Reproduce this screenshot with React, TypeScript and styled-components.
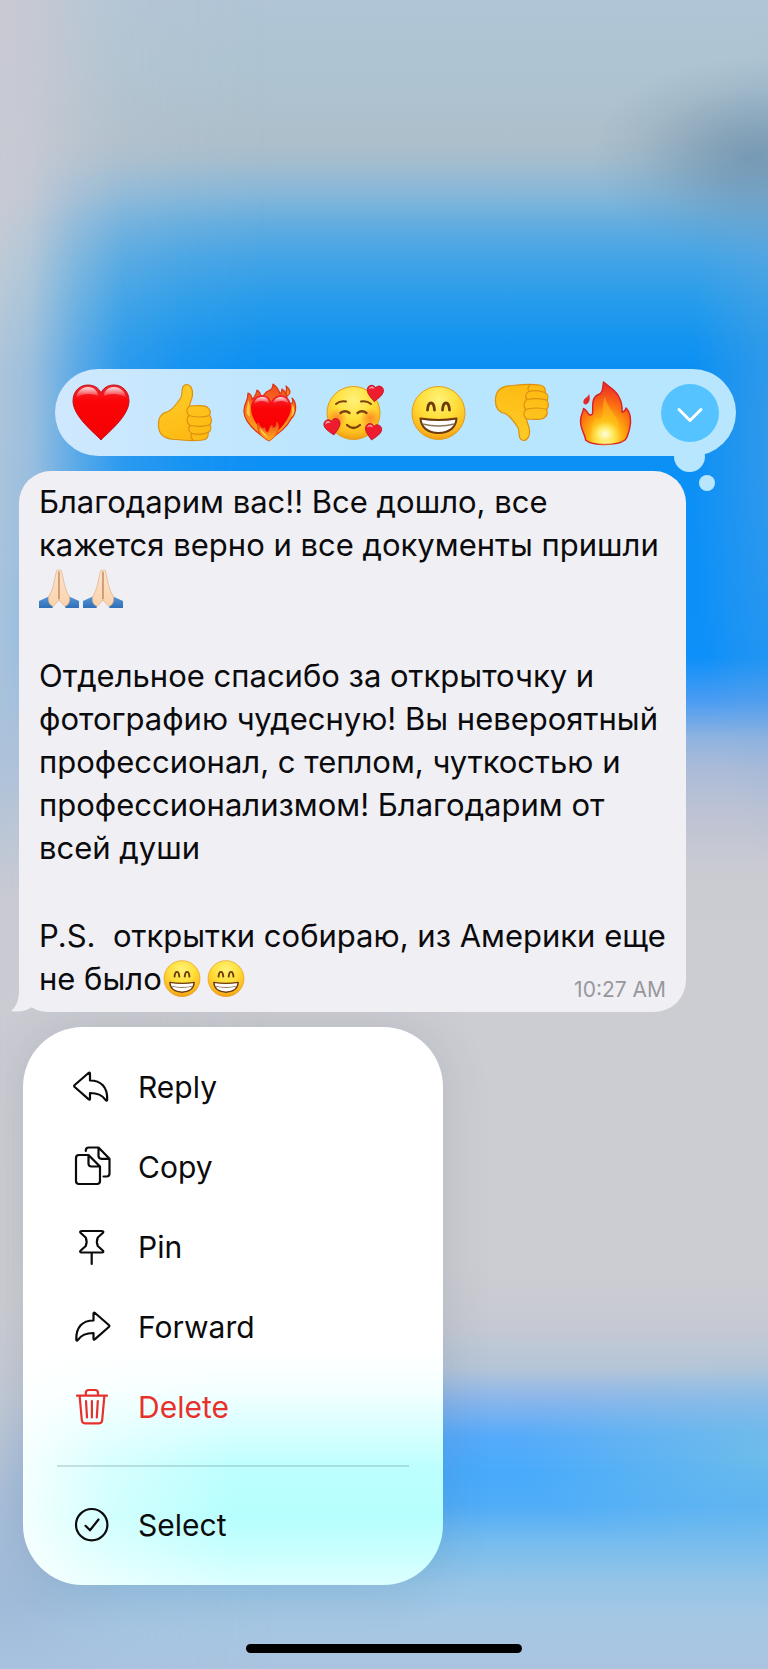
import React from "react";
import styled, { createGlobalStyle } from "styled-components";

const INK = "#0b0b0d";
const BUBBLE = "#f0eff4";
const DANGER = "#e8302c";

const GlobalStyle = createGlobalStyle`
  *, *::before, *::after { box-sizing: border-box; }
  body {
    margin: 0;
    font-family: Inter, "Liberation Sans", sans-serif;
    color: ${INK};
    background: #cccdd3;
  }
  button { font: inherit; color: inherit; border: 0; padding: 0; background: none; cursor: pointer; }
`;

const Screen = styled.main`
  position: relative;
  isolation: isolate;
  overflow: hidden;
  min-height: 100vh;
  display: flex;
  flex-direction: column;
  padding-top: 369px;
  background:
    radial-gradient(21% 6% at 98% 9.4%, rgba(84, 126, 158, 0.55), rgba(84, 126, 158, 0.4) 30%, rgba(84, 126, 158, 0.12) 70%, rgba(84, 126, 158, 0)),
    radial-gradient(36% 6% at 103% 87%, rgba(135, 202, 220, 0.6), rgba(135, 202, 220, 0.3) 50%, rgba(135, 202, 220, 0)),
    radial-gradient(12% 26% at 102% 26%, rgba(120, 170, 215, 0.4), rgba(120, 170, 215, 0)),
    linear-gradient(
      180deg,
      #b0c5d6 0%, #aec4d2 4%, #adbfcb 8.4%, #a2bdcf 9.8%, #86b7d9 11.6%, #62ade0 13.4%,
      #44a4e6 15.4%, #279ceb 18%, #1394f0 20.4%, #0b90f3 22%, #0c90f8 34%, #0d90f9 39.4%,
      #4a9cf2 42%, #8fb3e0 44.2%, #aabbd8 46%, #bcc2d4 48.4%, #cacbd2 52%, #cccdd3 56%, #cccdd3 76%,
      #c8cad2 79%, #b5c5d8 82%, #87b5ec 84%, #57abfa 86%, #48aafc 88.2%, #50adf8 90.2%,
      #76bcee 92.4%, #97c5e6 95%, #a5c7e3 97.2%, #aac4e0 100%
    );

  &::before {
    content: "";
    position: absolute;
    inset: 0;
    z-index: -1;
    background: linear-gradient(
      180deg,
      #c8c9d2 0%, #c8cad3 12%, #bccad6 16%, #acc4da 22%, #a6c2dd 38%, #aec2d9 46%,
      #c9cad2 54%, #cccdd3 78%, #c2c9d5 84%, #aabfd9 90%, #a0bad9 96%, #a8c2df 100%
    );
    mask-image: linear-gradient(90deg, #000 0%, rgba(0, 0, 0, 0.9) 4%, rgba(0, 0, 0, 0.5) 10%, rgba(0, 0, 0, 0.2) 16%, rgba(0, 0, 0, 0.08) 24%, transparent 36%);
  }
`;

const ReactionBar = styled.div`
  position: relative;
  display: flex;
  align-items: center;
  justify-content: space-between;
  height: 87px;
  margin: 0 32px 0 55px;
  padding: 0 17px;
  border-radius: 44px;
  background: linear-gradient(90deg, #cfe8fe, #b8e6fe 45%, #b8e6fe);

  &::before, &::after {
    content: "";
    position: absolute;
    border-radius: 50%;
    background: #b8e6fe;
  }
  &::before { width: 31px; height: 31px; right: 31px; bottom: -16px; }
  &::after { width: 16px; height: 16px; right: 21px; bottom: -35px; }
`;

const Reaction = styled.button<{ $filled?: boolean }>`
  position: relative;
  z-index: 1;
  display: grid;
  place-items: center;
  width: 58px;
  height: 58px;
  border-radius: 50%;
  background: ${(p) => (p.$filled ? "#54c3ff" : "none")};
`;

const Glyph = styled.svg<{ $size: number }>`
  display: block;
  width: ${(p) => p.$size}px;
  height: ${(p) => p.$size}px;
  overflow: visible;
`;

const InlineEmoji = styled.svg`
  width: 40px;
  height: 40px;
  margin-right: 4px;
  vertical-align: -9px;
  overflow: visible;
`;

const Bubble = styled.article`
  position: relative;
  display: grid;
  margin: 15px 82px 0 19px;
  padding: 9px 20px 12px;
  border-radius: 32px 32px 32px 28px;
  background: ${BUBBLE};
`;

const Tail = styled.svg`
  position: absolute;
  left: -8px;
  bottom: 0;
  width: 24px;
  height: 27px;
`;

const MessageText = styled.div`
  grid-area: 1 / 1;
  font-size: 31px;
  line-height: 43px;
  white-space: pre-wrap;

  p { margin: 0; }
  p + p { margin-top: 45px; }
`;

const Time = styled.time`
  grid-area: 1 / 1;
  place-self: end;
  font-size: 21px;
  line-height: 20px;
  color: #98979d;
`;

const Menu = styled.nav`
  width: 420px;
  max-width: calc(100% - 46px);
  margin: 15px 0 58px 23px;
  padding: 20px 0;
  border-radius: 60px;
  background:
    linear-gradient(90deg, rgba(255, 255, 255, 0.85), rgba(255, 255, 255, 0.4) 20%, rgba(255, 255, 255, 0) 50%),
    linear-gradient(180deg, #fff 58%, #f4ffff 65%, #d9ffff 72%, #bdfffe 79%, #b6fffe 88%, #c8fffe 94%, #dcffff 100%),
    #fff;
  box-shadow: 0 0 50px rgba(60, 70, 90, 0.14);
`;

const MenuItem = styled.button<{ $danger?: boolean }>`
  display: flex;
  align-items: center;
  gap: 26px;
  width: 100%;
  height: 80px;
  padding: 0 49px;
  font-size: 30px;
  line-height: 40px;
  text-align: left;
  color: ${(p) => (p.$danger ? DANGER : INK)};
`;

const Divider = styled.hr`
  height: 2px;
  margin: 18px 34px;
  border: 0;
  background: rgba(80, 110, 120, 0.22);
`;

const HomeIndicator = styled.div`
  width: 36%;
  height: 9px;
  margin: auto auto 16px;
  border-radius: 5px;
  background: #000;
`;

const HEART = "M29 56C25 51 1 33 1 17C1 7 8 1 16 1C22 1 27 4 29 9C31 4 36 1 42 1C50 1 57 7 57 17C57 33 33 51 29 56Z";

function EmojiPaints() {
  return (
    <svg width="0" height="0" aria-hidden="true" style={{ position: "absolute" }}>
      <defs>
        <linearGradient id="heart" x1="0" y1="0" x2="0" y2="1">
          <stop offset="0" stopColor="#ee2a35" />
          <stop offset="0.3" stopColor="#fb0406" />
          <stop offset="1" stopColor="#f50003" />
        </linearGradient>
        <linearGradient id="gloss" x1="0" y1="0" x2="0" y2="1">
          <stop offset="0" stopColor="#fff" stopOpacity="0.85" />
          <stop offset="1" stopColor="#fff" stopOpacity="0" />
        </linearGradient>
        <radialGradient id="face" cx="0.5" cy="0.25" r="0.78">
          <stop offset="0" stopColor="#fff27a" />
          <stop offset="0.45" stopColor="#ffdf3a" />
          <stop offset="0.8" stopColor="#fdbd1e" />
          <stop offset="1" stopColor="#ee9413" />
        </radialGradient>
        <radialGradient id="blush">
          <stop offset="0" stopColor="#ff7420" stopOpacity="0.75" />
          <stop offset="1" stopColor="#ff7420" stopOpacity="0" />
        </radialGradient>
        <linearGradient id="hand" x1="0" y1="0" x2="0.3" y2="1">
          <stop offset="0" stopColor="#ffcd2b" />
          <stop offset="1" stopColor="#fdbb13" />
        </linearGradient>
        <radialGradient id="flame" cx="0.5" cy="0.92" r="0.95">
          <stop offset="0" stopColor="#fffce0" />
          <stop offset="0.14" stopColor="#ffee58" />
          <stop offset="0.36" stopColor="#ffb010" />
          <stop offset="0.6" stopColor="#fb6f12" />
          <stop offset="0.9" stopColor="#ee3023" />
        </radialGradient>
        <radialGradient id="glow">
          <stop offset="0" stopColor="#fffde0" />
          <stop offset="0.5" stopColor="#fff27a" stopOpacity="0.8" />
          <stop offset="1" stopColor="#ffe040" stopOpacity="0" />
        </radialGradient>
        <linearGradient id="ember" x1="0" y1="0" x2="0" y2="1">
          <stop offset="0" stopColor="#f04a1c" />
          <stop offset="1" stopColor="#ffb21c" />
        </linearGradient>
        <linearGradient id="skin" x1="0" y1="0" x2="0" y2="1">
          <stop offset="0" stopColor="#fbe3cb" />
          <stop offset="1" stopColor="#fbd3ac" />
        </linearGradient>
        <linearGradient id="sleeve" x1="0" y1="0" x2="0" y2="1">
          <stop offset="0" stopColor="#5796d6" />
          <stop offset="1" stopColor="#2f6fb8" />
        </linearGradient>
      </defs>
    </svg>
  );
}

const HeartEmoji = () => (
  <>
    <path d={HEART} fill="url(#heart)" stroke="#c01218" strokeWidth="1" />
    <path d="M4 14C5 7 10 3 16 3C22 3 26 7 26 12C20 9 10 9 4 14Z" fill="url(#gloss)" />
    <path d="M32 12C32 7 36 3 42 3C48 3 53 7 54 14C48 9 38 9 32 12Z" fill="url(#gloss)" />
  </>
);

const ThumbUpEmoji = () => (
  <g stroke="#dd9010" strokeWidth="1.2" strokeLinejoin="round" strokeLinecap="round">
    <path
      fill="url(#hand)"
      d="M30.500 .5C35 .5 37 6 36.500 11C36 16 33.500 19 33.500 22C40 21.500 48 21 51 23C54 25 55 28 53.500 31.500C56 34 56 38 54 40.500C55.500 43.500 55 47 52 48.500C53 52 51 55.500 47 56C39 57 28 56.500 20 55.500C10 55.500 3 52 2.500 42C2 34 5 29 12 27.500C17 25.500 22 18 25 13.500C27 9 24.500 1 30.500 .5Z"
    />
    <path fill="none" d="M33.500 22C30 25 30 29 33 31.500M53.500 31.500C47 34 37 33 33 31.500C30 34 30.500 39 34 41.500M54 40.500C49 43 39 42.500 34 41.500C31.500 44 32.500 48 36 49.500M52 48.500C47 50.500 40 50.500 36 49.500C34 51.500 35 54.500 37 56" />
  </g>
);

const ThumbDownEmoji = () => (
  <g transform="matrix(1 0 0 -1 0 57)">
    <ThumbUpEmoji />
  </g>
);

const HeartOnFireEmoji = () => (
  <>
    <g fill="url(#ember)" stroke="#dc3218" strokeWidth="1.2" strokeLinejoin="round">
      <path d="M28 56C14 47 3 37 4 26C4 19 8 18 8 9C11 10 12 13 12 16C15 13 16 11 17 6C20 8 21 11 21 14C25 11 25 8 28 7C32 6 33 4 33 0C37 3 39 6 40 10C41 9 42 7 42 5C46 8 47 11 47 15C48 18 50 20 52 19C53 18 53 16 52 14C57 19 57 29 51 35C47 43 37 51 28 56Z" />
      <path d="M47 12C44 8 48 6 46 2C50 5 52 9 47 12Z" />
    </g>
    <path d="M30 56C26 50 11 39 11 24C11 15 17 11 22 11C27 11 30 14 31 18C33 14 36 11 41 11C47 11 51 16 51 23C51 37 35 49 30 56Z" fill="url(#heart)" />
    <path d="M14 20C15 14 19 13 23 13C27 13 29 16 29 20C24 16 19 16 14 20Z" fill="url(#gloss)" />
    <path d="M33 20C34 15 37 13 41 13C45 13 48 16 49 20C44 16 38 16 33 20Z" fill="url(#gloss)" />
    <path d="M29 57C23 54 16 49 18 39C20 43 22 45 24 44C26 43 24 47 27 48C29 49 29 43 32 41C32 45 36 45 37 38C42 45 35 54 29 57Z" fill="url(#ember)" stroke="#e8501a" strokeWidth="1" />
    <path d="M28 54C24 51 20 48 20 44C23 48 26 50 28 54Z" fill="#ffd84a" />
    <path d="M7 30C6 25 8 21 8 16C11 21 9 26 10 33ZM51 33C53 28 51 25 53 21C55 26 55 30 51 33Z" fill="#ffc93c" />
  </>
);

const SmallHeart = ({ x, y, turn }: { x: number; y: number; turn: number }) => (
  <g transform={`translate(${x} ${y}) rotate(${turn}) scale(0.29) translate(-29 -28)`}>
    <path d={HEART} fill="#ee1c2e" stroke="#bb1424" strokeWidth="3" />
    <path d="M6 16C7 8 12 5 17 5C22 5 25 9 25 13C19 10 12 11 6 16Z" fill="#fff" opacity="0.55" />
  </g>
);

const HeartsFaceEmoji = () => (
  <>
    <circle cx="29.500" cy="29" r="26.500" fill="url(#face)" stroke="#e79a1c" strokeWidth="1" />
    <circle cx="13" cy="34" r="10" fill="url(#blush)" />
    <circle cx="46" cy="34" r="10" fill="url(#blush)" />
    <g fill="none" stroke="#7b3f0b" strokeWidth="1.900" strokeLinecap="round">
      <path d="M12 20Q16 16.500 22 17.500M37 17.500Q43 16.500 47 20" />
      <path d="M16.500 29Q21 25.500 25.500 29M33.500 29Q38 25.500 42.500 29" strokeWidth="2.300" />
      <path d="M23 41Q29.500 47 36 41" strokeWidth="2.300" />
    </g>
    <SmallHeart x={51} y={9.5} turn={6} />
    <SmallHeart x={8.5} y={43} turn={-10} />
    <SmallHeart x={49} y={48} turn={10} />
  </>
);

const GrinEmoji = () => (
  <>
    <circle cx="29.500" cy="29" r="26.500" fill="url(#face)" stroke="#e79a1c" strokeWidth="1" />
    <path d="M18.500 26Q19 19 22 19T25.500 26M33.500 26Q34 19 37 19T40.500 26" fill="none" stroke="#6f3a0a" strokeWidth="2.800" strokeLinecap="round" />
    <path d="M11.500 34.500Q29.500 37.500 47.500 34.500C47 43.500 40 49 29.500 49S12 43.500 11.500 34.500Z" fill="#fff" stroke="#6b3a10" strokeWidth="2" strokeLinejoin="round" />
    <path d="M13.500 40Q29.500 44 45.500 40" fill="none" stroke="#8e7558" strokeWidth="1.500" />
  </>
);

const FireEmoji = () => (
  <>
    <path
      fill="url(#flame)"
      stroke="#d81f22"
      strokeWidth="1.400"
      strokeLinejoin="round"
      d="M26.500 -2C32 3 39 6 42 13C45 19 45.500 23 45 28C47.500 28 48.500 26 49 24C54 29 54.500 38 52.500 45C51 51 50 54 48 56C42 60.500 34 60.500 27.500 60.500S13 60 8.500 56C9 52 3.500 46 3.500 37C3.500 31 6 29 6.500 24.500C9.500 26 10 28 11.500 30C12.500 31.500 15 31.500 15.500 29.500C16.500 25 14 18 18 13C21 9 23 12 25 7C26 4 26 1 26.500 -2Z"
    />
    <path d="M28 12C30 26 42 30 42 45C42 52 36 58 28 58C20 58 14 53 14 45C14 39 18 37 19 32C20 35 21 37 23 35C28 31 24 22 28 12Z" fill="#ffc31a" opacity="0.5" />
    <ellipse cx="28" cy="50" rx="15" ry="13" fill="url(#glow)" />
    <path d="M12 10C13.500 14 13 19 9 20.500C6 21 5.500 16.500 8 14.500C10 13 11.500 12 12 10Z" fill="#e5282a" />
  </>
);

const PrayEmoji = () => (
  <InlineEmoji viewBox="0 0 40 40" role="img" aria-label="🙏🏻">
    <path d="M0 33L11 28L15 36L13.500 40H0ZM40 33L29 28L25 36L26.500 40H40Z" fill="url(#sleeve)" />
    <path d="M17.500 3C18.500 1 20 2 20 4V32L14 38.500Q8.500 36 9.500 29C12.500 24 14.500 18 15.500 12Z" fill="url(#skin)" stroke="#dfb08a" strokeWidth="0.700" />
    <path d="M22.500 3C21.500 1 20 2 20 4V32L26 38.500Q31.500 36 30.500 29C27.500 24 25.500 18 24.500 12Z" fill="url(#skin)" stroke="#dfb08a" strokeWidth="0.700" />
    <path d="M20 4V31" fill="none" stroke="#b97d54" strokeWidth="1.100" />
  </InlineEmoji>
);

const GrinInline = () => (
  <InlineEmoji viewBox="0 0 59 59" role="img" aria-label="😁">
    <GrinEmoji />
  </InlineEmoji>
);

const reactions = [
  { label: "❤️", Shape: HeartEmoji },
  { label: "👍", Shape: ThumbUpEmoji },
  { label: "❤️‍🔥", Shape: HeartOnFireEmoji },
  { label: "🥰", Shape: HeartsFaceEmoji },
  { label: "😁", Shape: GrinEmoji },
  { label: "👎", Shape: ThumbDownEmoji },
  { label: "🔥", Shape: FireEmoji },
];

const ARROW = "M2.700 18L16.500 6Q18 5 18 6.800V13.500C29 13.500 35.500 20 35.200 32.500C35.200 34.200 34 33.500 33.500 32.800C30.500 28.500 26 26 18 26V31.500Q18 33.500 16.500 32.200L2.700 20Q1.600 19 2.700 18Z";

const icons = {
  reply: <path d={ARROW} />,
  forward: <path d={ARROW} transform="matrix(-1 0 0 1 39.500 0)" />,
  copy: (
    <>
      <path d="M16.500 8H7Q4 8 4 11V34Q4 37 7 37H25Q28 37 28 34V19.500ZM16.500 8V16.500Q16.500 19.500 19.500 19.500H28" />
      <path d="M13.800 4V3.500Q13.800 .5 16.800 .5H26.500L37.500 11.800V26.500Q37.500 29.500 34.500 29.500H31.500M26.500 .5V8.800Q26.500 11.800 29.500 11.800H37.500" />
    </>
  ),
  pin: (
    <path d="M9.500 4H30Q32 4.300 31 5.800L25.800 10.500Q24 14.500 25.800 19L31 23.700Q32 25.200 30 25.500H9.500Q7.500 25.200 8.500 23.700L13.700 19Q15.500 14.500 13.700 10.500L8.500 5.800Q7.500 4.300 9.500 4ZM19.700 25.500V37" />
  ),
  trash: (
    <path d="M5 8.700H35M13.800 8.700V6Q13.800 3 16.800 3H23Q26 3 26 6V8.700M7.600 8.700L9.800 33Q10 36.300 13 36.300H27Q30 36.300 30.200 33L32.400 8.700M14 14L15 30.500M19.900 14V30.500M25.800 14L24.800 30.500" />
  ),
  select: (
    <>
      <circle cx="19.700" cy="19.700" r="15.700" />
      <path d="M13.500 20.800L18 25.300L26.500 14.500" />
    </>
  ),
};

const actions: { label: string; icon: keyof typeof icons; danger?: boolean }[] = [
  { label: "Reply", icon: "reply" },
  { label: "Copy", icon: "copy" },
  { label: "Pin", icon: "pin" },
  { label: "Forward", icon: "forward" },
  { label: "Delete", icon: "trash", danger: true },
];

function Action({ label, icon, danger }: (typeof actions)[number]) {
  return (
    <MenuItem type="button" $danger={danger}>
      <Glyph $size={40} viewBox="0 0 40 40" fill="none" stroke="currentColor" strokeWidth="2.200" strokeLinecap="round" strokeLinejoin="round" aria-hidden="true">
        {icons[icon]}
      </Glyph>
      {label}
    </MenuItem>
  );
}

export default function App() {
  return (
    <Screen>
      <GlobalStyle />
      <EmojiPaints />
      <ReactionBar>
        {reactions.map(({ label, Shape }) => (
          <Reaction key={label} type="button" aria-label={label}>
            <Glyph $size={58} viewBox="0 0 58 58" aria-hidden="true">
              <Shape />
            </Glyph>
          </Reaction>
        ))}
        <Reaction type="button" $filled aria-label="More reactions">
          <Glyph $size={28} viewBox="0 0 28 28" fill="none" stroke="#fff" strokeWidth="3" strokeLinecap="round" strokeLinejoin="round" aria-hidden="true">
            <path d="M3 10.500L14 21.500L25 10.500" />
          </Glyph>
        </Reaction>
      </ReactionBar>

      <Bubble>
        <Tail viewBox="0 0 24 27" aria-hidden="true">
          <path d="M8 0V5C8 16 5 22 0 26C8 27.500 15 26 21 22L24 0Z" fill={BUBBLE} />
        </Tail>
        <MessageText lang="ru">
          <p>
            Благодарим вас!! Все дошло, все
            <br />
            кажется верно и все документы пришли
            <br />
            <PrayEmoji />
            <PrayEmoji />
          </p>
          <p>
            Отдельное спасибо за открыточку и
            <br />
            фотографию чудесную! Вы невероятный
            <br />
            профессионал, с теплом, чуткостью и
            <br />
            профессионализмом! Благодарим от
            <br />
            всей души
          </p>
          <p>
            {"P.S.  открытки собираю, из Америки еще"}
            <br />
            не было
            <GrinInline />
            <GrinInline />
          </p>
        </MessageText>
        <Time>10:27 AM</Time>
      </Bubble>

      <Menu aria-label="Message actions">
        {actions.map((action) => (
          <Action key={action.label} {...action} />
        ))}
        <Divider />
        <Action label="Select" icon="select" />
      </Menu>

      <HomeIndicator />
    </Screen>
  );
}
